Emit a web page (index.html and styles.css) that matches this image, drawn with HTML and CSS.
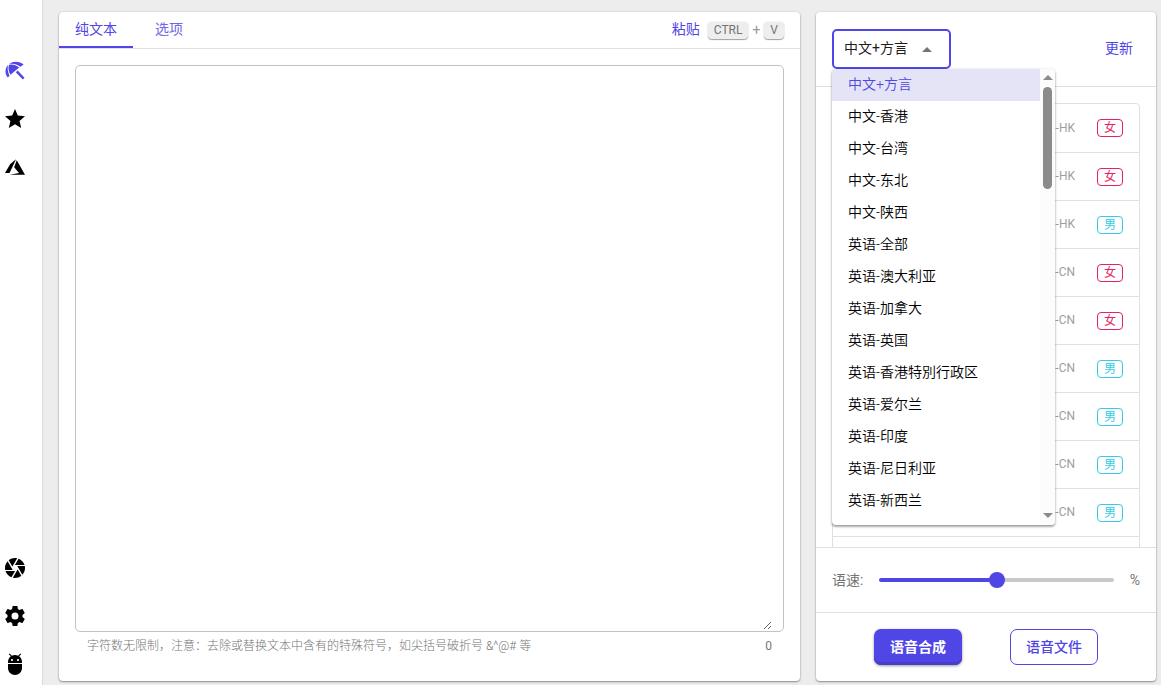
FILE: index.html
```html
<!DOCTYPE html>
<html lang="zh-CN">
<head>
    <meta charset="UTF-8">
    <meta name="viewport" content="width=device-width, initial-scale=1.0">
    <title>语音合成</title>
    <link rel="stylesheet" href="styles.css">
</head>
<body>
    <nav class="sidebar">
        <div class="nav-group">
            <a class="nav-item active"><svg viewBox="0 0 24 24"><path d="M4.8 18.4C1.6 14.6 1.8 9 5 5.9C4.2 9.4 4.9 13 6.5 16.7zM7.5 15.8C5.5 12.4 5 8.8 5.9 6C9 5 13 6 16.2 8.6zM6.2 4.9C10 1.9 16.4 1.9 20.6 5.4L17.4 7.8C14 5.2 10.4 4.2 6.2 4.9zM12.8 13.2l1.9-1.6 6.8 7.1-1.7 1.7z"/></svg></a>
            <a class="nav-item"><svg viewBox="0 0 24 24"><path d="M12,17.27L18.18,21L16.54,13.97L22,9.24L14.81,8.62L12,2L9.19,8.62L2,9.24L7.45,13.97L5.82,21L12,17.27Z"/></svg></a>
            <a class="nav-item"><svg viewBox="0 0 24 24"><path d="M13.05,4.24L6.56,18.05L2,18L7.09,9.24L13.05,4.24M13.75,5.33L22,19.76H6.74L16.04,18.1L11.17,12.31L13.75,5.33Z"/></svg></a>
        </div>
        <div class="nav-group">
            <a class="nav-item"><svg viewBox="0 0 24 24"><path d="M13.73,15L9.83,21.76C10.53,21.91 11.25,22 12,22C14.4,22 16.6,21.15 18.32,19.75L14.66,13.4M2.46,15C3.38,17.92 5.61,20.26 8.45,21.34L12.12,15M8.54,12L4.64,5.25C3,7 2,9.39 2,12C2,12.68 2.07,13.35 2.2,14H9.69M21.8,10H14.31L14.6,10.5L19.36,18.75C21,16.97 22,14.6 22,12C22,11.31 21.93,10.64 21.8,10M21.54,9C20.62,6.07 18.39,3.74 15.55,2.66L11.88,9M9.4,10.5L14.17,2.24C13.47,2.09 12.75,2 12,2C9.6,2 7.4,2.84 5.68,4.25L9.34,10.6L9.4,10.5Z"/></svg></a>
            <a class="nav-item"><svg viewBox="0 0 24 24"><path d="M12,15.5A3.5,3.5 0 0,1 8.5,12A3.5,3.5 0 0,1 12,8.5A3.5,3.5 0 0,1 15.5,12A3.5,3.5 0 0,1 12,15.5M19.43,12.97C19.47,12.65 19.5,12.33 19.5,12C19.5,11.67 19.47,11.34 19.43,11L21.54,9.37C21.73,9.22 21.78,8.95 21.66,8.73L19.66,5.27C19.54,5.05 19.27,4.96 19.05,5.05L16.56,6.05C16.04,5.66 15.5,5.32 14.87,5.07L14.5,2.42C14.46,2.18 14.25,2 14,2H10C9.75,2 9.54,2.18 9.5,2.42L9.13,5.07C8.5,5.32 7.96,5.66 7.44,6.05L4.95,5.05C4.73,4.96 4.46,5.05 4.34,5.27L2.34,8.73C2.21,8.95 2.27,9.22 2.46,9.37L4.57,11C4.53,11.34 4.5,11.67 4.5,12C4.5,12.33 4.53,12.65 4.57,12.97L2.46,14.63C2.27,14.78 2.21,15.05 2.34,15.27L4.34,18.73C4.46,18.95 4.73,19.03 4.95,18.95L7.44,17.94C7.96,18.34 8.5,18.68 9.13,18.93L9.5,21.58C9.54,21.82 9.75,22 10,22H14C14.25,22 14.46,21.82 14.5,21.58L14.87,18.93C15.5,18.67 16.04,18.34 16.56,17.94L19.05,18.95C19.27,19.03 19.54,18.95 19.66,18.73L21.66,15.27C21.78,15.05 21.73,14.78 21.54,14.63L19.43,12.97Z"/></svg></a>
            <a class="nav-item"><svg viewBox="0 0 24 24"><path d="M5 16c0 3.87 3.13 7 7 7s7-3.13 7-7v-4H5v4zM16.12 4.37l2.1-2.1-.82-.83-2.3 2.31C14.16 3.28 13.12 3 12 3s-2.16.28-3.09.75L6.6 1.44l-.82.83 2.1 2.1C6.14 5.64 5 7.68 5 10v1h14v-1c0-2.32-1.14-4.36-2.88-5.63zM9 9c-.55 0-1-.45-1-1s.45-1 1-1 1 .45 1 1-.45 1-1 1zm6 0c-.55 0-1-.45-1-1s.45-1 1-1 1 .45 1 1-.45 1-1 1z"/></svg></a>
        </div>
    </nav>
    <main class="content">
        <section class="card editor">
            <div class="tabs">
                <div class="tab active">纯文本</div>
                <div class="tab">选项</div>
                <div class="paste">
                    <span class="paste-label">粘贴</span>
                    <kbd>CTRL</kbd><span class="plus">+</span><kbd>V</kbd>
                </div>
            </div>
            <div class="editor-body">
                <div class="field">
                    <textarea class="text-input"></textarea>
                </div>
                <div class="hint">
                    <span>字符数无限制，注意：去除或替换文本中含有的特殊符号，如尖括号破折号 &amp;^@# 等</span>
                    <span class="count">0</span>
                </div>
            </div>
        </section>
        <section class="card voices">
            <div class="voices-header">
                <div class="select">
                    <span>中文+方言</span>
                    <span class="caret"></span>
                    <div class="menu">
                        <div class="options">
                            <div class="option selected">中文+方言</div>
                            <div class="option">中文-香港</div>
                            <div class="option">中文-台湾</div>
                            <div class="option">中文-东北</div>
                            <div class="option">中文-陕西</div>
                            <div class="option">英语-全部</div>
                            <div class="option">英语-澳大利亚</div>
                            <div class="option">英语-加拿大</div>
                            <div class="option">英语-英国</div>
                            <div class="option">英语-香港特別行政区</div>
                            <div class="option">英语-爱尔兰</div>
                            <div class="option">英语-印度</div>
                            <div class="option">英语-尼日利亚</div>
                            <div class="option">英语-新西兰</div>
                        </div>
                        <div class="scrollbar">
                            <span class="arrow up"></span>
                            <span class="thumb"></span>
                            <span class="arrow down"></span>
                        </div>
                    </div>
                </div>
                <a class="refresh">更新</a>
            </div>
            <div class="voices-body">
                <div class="voice-list">
                    <div class="voice"><span class="locale">-HK</span><span class="badge female">女</span></div>
                    <div class="voice"><span class="locale">-HK</span><span class="badge female">女</span></div>
                    <div class="voice"><span class="locale">-HK</span><span class="badge male">男</span></div>
                    <div class="voice"><span class="locale">-CN</span><span class="badge female">女</span></div>
                    <div class="voice"><span class="locale">-CN</span><span class="badge female">女</span></div>
                    <div class="voice"><span class="locale">-CN</span><span class="badge male">男</span></div>
                    <div class="voice"><span class="locale">-CN</span><span class="badge male">男</span></div>
                    <div class="voice"><span class="locale">-CN</span><span class="badge male">男</span></div>
                    <div class="voice"><span class="locale">-CN</span><span class="badge male">男</span></div>
                    <div class="voice"></div>
                </div>
            </div>
            <div class="rate">
                <span class="rate-label">语速:</span>
                <div class="slider">
                    <div class="slider-fill"></div>
                    <div class="slider-thumb"></div>
                    <div class="slider-rest"></div>
                </div>
                <span class="percent">%</span>
            </div>
            <div class="actions">
                <button class="btn primary">语音合成</button>
                <button class="btn outline">语音文件</button>
            </div>
        </section>
    </main>
</body>
</html>
```
FILE: styles.css
```css
* {
    box-sizing: border-box;
}
body {
    margin: 0;
    display: flex;
    height: 100vh;
    overflow: hidden;
    background: #ededed;
    font-family: Roboto, "Noto Sans CJK SC", sans-serif;
    font-size: 14px;
    line-height: 20px;
    color: #1d1d1d;
}
.sidebar {
    display: flex;
    flex-direction: column;
    justify-content: space-between;
    width: 43px;
    padding-top: 47px;
    background: white;
    border-right: 1px solid #dcdcdc;
}
.nav-group:last-child {
    margin-bottom: -3px;
}
.nav-item {
    display: flex;
    align-items: center;
    height: 48px;
    padding-left: 3px;
}
.nav-item svg {
    width: 24px;
    height: 24px;
    fill: black;
}
.nav-item.active svg {
    fill: #4f46e5;
}
.content {
    display: flex;
    flex: 1;
    gap: 16px;
    padding: 12px 5px 4px 16px;
}
.card {
    display: flex;
    flex-direction: column;
    background: white;
    border-radius: 4px;
    box-shadow: 0 1px 2px rgba(0, 0, 0, 0.4), 0 0 2px rgba(0, 0, 0, 0.12);
}
.editor {
    flex: 1;
}
.tabs {
    display: flex;
    height: 37px;
    border-bottom: 1px solid #e0e0e0;
}
.tab {
    height: 36px;
    padding: 7px 16px 0;
    color: #6f66e8;
}
.tab.active {
    width: 74px;
    color: #4f46e5;
    border-bottom: 2px solid #4f46e5;
    margin-right: 6px;
}
.paste {
    display: flex;
    align-items: center;
    margin-left: auto;
    padding-right: 16px;
}
.paste-label {
    margin-right: 8px;
    padding-bottom: 2px;
    color: #4f46e5;
}
kbd {
    height: 17px;
    padding: 0 6px;
    border-radius: 4px;
    background: #eeeeee;
    box-shadow: 0 1px 1px rgba(0, 0, 0, 0.35), 0 0 2px rgba(0, 0, 0, 0.12);
    font-family: inherit;
    font-size: 12px;
    line-height: 17px;
    color: #757575;
}
.plus {
    margin: 0 4px;
    color: #999;
}
.editor-body {
    display: flex;
    flex-direction: column;
    flex: 1;
    padding: 16px 16px 25px;
}
.field {
    display: flex;
    flex: 1;
    padding: 0 11px 1px;
    border: 1px solid #c2c2c2;
    border-radius: 5px;
}
.text-input {
    flex: 1;
    padding: 12px 0;
    border: 0;
    outline: none;
    font: inherit;
    resize: vertical;
}
.hint {
    display: flex;
    justify-content: space-between;
    height: 24px;
    padding: 4px 12px 0;
    font-size: 12px;
    font-weight: 300;
    color: #757575;
}
.count {
    font-weight: 400;
}
.voices {
    width: 340px;
}
.voices-header {
    display: flex;
    justify-content: space-between;
    height: 75px;
    padding: 17px 23px 0 16px;
    border-bottom: 1px solid #e0e0e0;
}
.select {
    position: relative;
    display: flex;
    align-items: center;
    width: 119px;
    height: 40px;
    padding: 0 10px 2px;
    border: 2px solid #4f46e5;
    border-radius: 5px;
}
.caret {
    margin: 2px 0 0 14px;
    border: 5px solid transparent;
    border-top: 0;
    border-bottom-color: #757575;
}
.menu {
    position: absolute;
    top: 38px;
    left: -2px;
    z-index: 2;
    display: flex;
    width: 223px;
    height: 456px;
    overflow: hidden;
    background: white;
    border-radius: 4px;
    box-shadow: 0 1px 3px rgba(0, 0, 0, 0.3), 0 2px 2px rgba(0, 0, 0, 0.2);
}
.options {
    flex: 1;
}
.option {
    height: 32px;
    padding: 5px 16px;
    font-weight: 350;
    color: #000;
}
.option.selected {
    background: #e5e4f7;
    color: #4f46e5;
}
.scrollbar {
    display: flex;
    flex-direction: column;
    align-items: center;
    width: 15px;
    padding: 6px 0 7px;
    background: #fcfcfc;
}
.arrow {
    border: 5px solid transparent;
}
.arrow.up {
    border-top: 0;
    border-bottom: 5px solid #8b8b8b;
}
.arrow.down {
    margin-top: auto;
    border-bottom: 0;
    border-top: 5px solid #8b8b8b;
}
.thumb {
    width: 9px;
    height: 102px;
    margin-top: 7px;
    border-radius: 5px;
    background: #8b8b8b;
}
.refresh {
    padding-top: 9px;
    color: #4f46e5;
}
.voices-body {
    height: 461px;
    padding: 16px 16px 0;
    overflow: hidden;
    border-bottom: 1px solid #e0e0e0;
}
.voice-list {
    border: 1px solid #dfdfdf;
    border-radius: 4px;
}
.voice {
    display: flex;
    align-items: center;
    justify-content: flex-end;
    height: 48px;
    padding-right: 16px;
    border-bottom: 1px solid #e0e0e0;
}
.voice:first-child {
    height: 49px;
}
.voice:first-child .badge {
    margin-top: 0;
}
.locale {
    margin-right: 22px;
    padding-bottom: 1px;
    font-size: 12px;
    color: #9e9e9e;
}
.badge {
    width: 26px;
    height: 18px;
    margin-top: 1px;
    border: 1px solid;
    border-radius: 4px;
    font-size: 12px;
    line-height: 17px;
    text-align: center;
}
.female {
    color: #e91e63;
}
.male {
    color: #31ccec;
}
.rate {
    display: flex;
    align-items: center;
    height: 65px;
    padding: 0 16px;
    border-bottom: 1px solid #e0e0e0;
    color: #757575;
}
.slider {
    display: flex;
    align-items: center;
    width: 235px;
    margin-left: 16px;
}
.slider-fill,
.slider-rest {
    flex: 1;
    height: 4px;
    border-radius: 2px;
    background: #c9c9c9;
}
.slider-fill {
    background: #4f46e5;
}
.slider-thumb {
    z-index: 1;
    width: 16px;
    height: 16px;
    margin: 0 -2px;
    border-radius: 50%;
    background: #4f46e5;
}
.percent {
    margin-left: auto;
    font-size: 14px;
}
.actions {
    display: flex;
    justify-content: center;
    gap: 48px;
    padding-top: 16px;
}
.btn {
    width: 88px;
    height: 36px;
    padding: 0 0 3px;
    border-radius: 7px;
    font-family: inherit;
    font-size: 14px;
    font-weight: 500;
}
.primary {
    border: 0;
    background: #4f46e5;
    color: white;
    font-weight: 700;
    box-shadow: inset 0 -3px 0 #463fca, 0 1px 3px rgba(0, 0, 0, 0.4);
}
.outline {
    border: 1px solid #4f46e5;
    background: white;
    color: #4f46e5;
}
```
